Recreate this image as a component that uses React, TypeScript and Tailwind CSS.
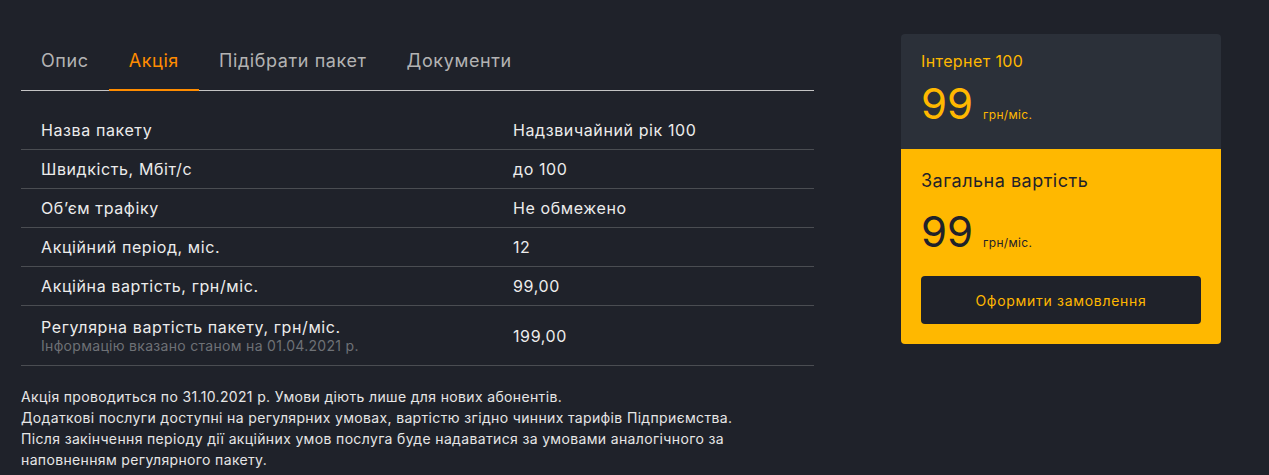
import React from "react";

const rows: { label: string; sub?: string; value: string }[] = [
  { label: "Назва пакету", value: "Надзвичайний рік 100" },
  { label: "Швидкість, Мбіт/с", value: "до 100" },
  { label: "Обʼєм трафіку", value: "Не обмежено" },
  { label: "Акційний період, міс.", value: "12" },
  { label: "Акційна вартість, грн/міс.", value: "99,00" },
  {
    label: "Регулярна вартість пакету, грн/міс.",
    sub: "Інформацію вказано станом на 01.04.2021 р.",
    value: "199,00",
  },
];

const tabs = ["Опис", "Акція", "Підібрати пакет", "Документи"];

export default function App() {
  return (
    <div
      className="w-[1269px] h-[475px] overflow-hidden bg-[#1f222a] flex"
      style={{ fontFamily: "Inter, 'Noto Sans', sans-serif" }}
    >
      <div className="w-[793px] ml-[21px] pt-[32px] flex flex-col">
        <div className="flex border-b border-[#c4c4c4] h-[59px]">
          {tabs.map((t, i) => (
            <div
              key={t}
              className={
                i === 1
                  ? "px-5 flex items-center text-[18px] tracking-[0.6px] text-[#ff8c00] border-b-2 border-[#ff8c00] -mb-px"
                  : "px-5 flex items-center text-[18px] tracking-[0.6px] text-[#b3b3b3]"
              }
            >
              <span className="-mt-[1px]">{t}</span>
            </div>
          ))}
        </div>
        <div className="mt-[20px]">
          {rows.map((r) => (
            <div
              key={r.label}
              className={
                r.sub
                  ? "flex items-center h-[60px] border-b border-[#4a4d52]"
                  : "flex items-center h-[39px] border-b border-[#4a4d52]"
              }
            >
              <div className="w-[472px] pl-5 text-[16px] tracking-[0.6px] text-[#ececec]">
                <div className="leading-[19px]">{r.label}</div>
                {r.sub && (
                  <div className="text-[14px] leading-[17px] tracking-[0.3px] text-[#6e7176]">{r.sub}</div>
                )}
              </div>
              <div className="pl-5 text-[16px] tracking-[0.6px] text-[#ececec]">{r.value}</div>
            </div>
          ))}
        </div>
        <div className="mt-[20px] text-[14px] leading-[21px] text-[#e6e6e6] tracking-[0.35px]">
          <p>Акція проводиться по 31.10.2021 р. Умови діють лише для нових абонентів.</p>
          <p>Додаткові послуги доступні на регулярних умовах, вартістю згідно чинних тарифів Підприємства.</p>
          <p>Після закінчення періоду дії акційних умов послуга буде надаватися за умовами аналогічного за</p>
          <p>наповненням регулярного пакету.</p>
        </div>
      </div>
      <div className="ml-[87px] mt-[34px] w-[320px] self-start rounded-[4px] overflow-hidden">
        <div className="bg-[#2b3039] h-[115px] px-5 pt-[17px]">
          <div className="text-[16px] tracking-[0.4px] text-[#ffb800] leading-[20px]">Інтернет 100</div>
          <div className="flex items-end mt-[12px]">
            <span className="text-[42px] leading-[42px] text-[#ffb800]">99</span>
            <span className="ml-[10px] mb-[1px] text-[12px] tracking-[0.3px] text-[#ffb800]">грн/міс.</span>
          </div>
        </div>
        <div className="bg-[#ffb800] px-5 pt-[20px] pb-[20px]">
          <div className="text-[18px] tracking-[0.5px] text-[#1f222a] leading-[24px]">Загальна вартість</div>
          <div className="flex items-end mt-[18px]">
            <span className="text-[42px] leading-[42px] text-[#1f222a]">99</span>
            <span className="ml-[10px] mb-[1px] text-[12px] tracking-[0.3px] text-[#1f222a]">грн/міс.</span>
          </div>
          <button className="mt-[23px] w-full h-[48px] rounded-[4px] bg-[#1f222a] text-[#ffb800] text-[14px] tracking-[0.7px]">
            Оформити замовлення
          </button>
        </div>
      </div>
    </div>
  );
}
